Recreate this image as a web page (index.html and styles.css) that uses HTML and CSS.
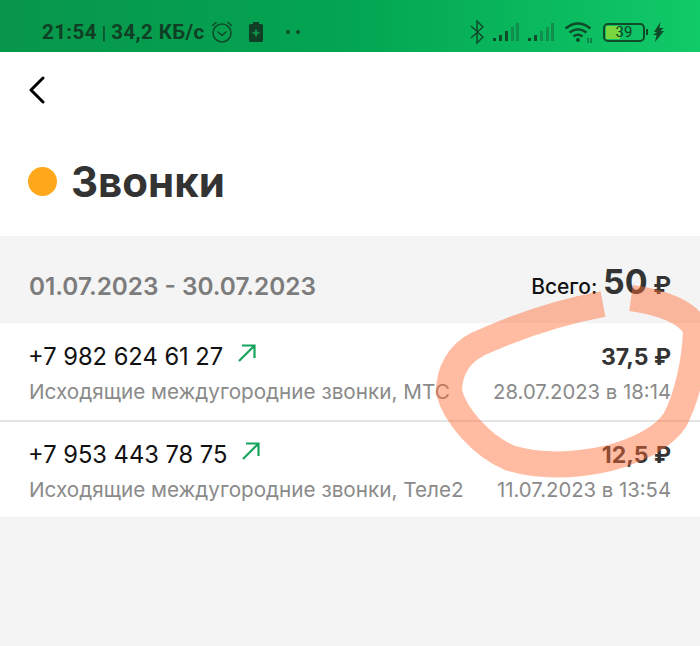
FILE: index.html
```html
<!DOCTYPE html>
<html lang="ru">
<head>
<meta charset="utf-8">
<title>Звонки</title>
<link rel="stylesheet" href="styles.css">
</head>
<body>
<div class="page">
  <header class="status">
    <div class="status-left">
      <span class="clock">21:54</span><span class="sep">|</span><span class="clock">34,2 КБ/с</span>
      <svg class="ico" width="24" height="24" viewBox="0 0 24 24" fill="none" stroke="#0f4a29" stroke-width="1.6" stroke-linecap="round" stroke-linejoin="round"><circle cx="12" cy="13" r="9"/><path d="M8 12l4 3.5 4-3.5M2.500 5.500L6 2.500M21.500 5.500L18 2.500"/></svg>
      <svg class="ico batt-small" width="16" height="22" viewBox="0 0 16 22"><path fill="#0f3f24" d="M5 1h6v2h2.500q1.500 0 1.500 1.500v15q0 1.500-1.500 1.500h-11q-1.500 0-1.500-1.500v-15q0-1.500 1.500-1.500H5z"/><path stroke="#0fa150" stroke-width="1.600" d="M8 8.500v7M4.500 12h7"/></svg>
      <span class="dots"><i></i><i></i></span>
    </div>
    <div class="status-right">
      <svg width="14" height="26" viewBox="0 0 14 26" fill="none" stroke="#0f4a29" stroke-width="1.500"><path d="M1 7l12 11-6 6V2l6 6L1 19"/></svg>
      <svg class="sig" width="27" height="20" viewBox="0 0 27 20"><path fill="#0f4a29" d="M1 16h3v3H1zM7 13h3v6H7z"/><path fill="#0f4a29" d="M13 9h3v10h-3z"/><path fill="#0f8f4b" d="M19 5h3v14h-3zM24 1h3v18h-3z"/></svg>
      <svg class="sig" width="27" height="20" viewBox="0 0 27 20"><path fill="#0f4a29" d="M1 16h3v3H1zM7 13h3v6H7z"/><path fill="#0f8f4b" d="M13 9h3v10h-3zM19 5h3v14h-3zM24 1h3v18h-3z"/></svg>
      <svg class="wifi" width="30" height="24" viewBox="0 0 30 24" fill="none" stroke="#0f4a29" stroke-width="2.400"><path d="M1.500 8.500Q14-1.500 26.500 8.500M5.500 12.500Q14 6 22.500 12.500M9.500 16.500Q14 13 18.500 16.500"/><circle cx="14" cy="20" r="2" fill="#0f4a29" stroke="none"/><path stroke-width="1" d="M24 18v5M27 18v5"/></svg>
      <div class="battery"><span class="level"></span><span class="pct">39</span></div>
      <span class="nub"></span>
      <svg width="11" height="20" viewBox="0 0 11 20"><path fill="#0f4a29" d="M7.500 0L1 10h3L0 13h3.500L2 20l9-11H7.500l3-3H6.500z"/></svg>
    </div>
  </header>

  <section class="head">
    <svg class="back" width="18" height="28" viewBox="0 0 18 28" fill="none" stroke="#000" stroke-width="3" stroke-linecap="round" stroke-linejoin="round"><path d="M15 2L3 14l12 12"/></svg>
    <div class="title-row">
      <span class="dot"></span>
      <h1>Звонки</h1>
    </div>
  </section>

  <main class="body">
    <div class="summary">
      <span class="range">01.07.2023 - 30.07.2023</span>
      <span class="total"><span class="total-label">Всего:</span> <b>50</b> <b class="cur">₽</b></span>
    </div>
    <div class="list">
      <div class="row">
        <div class="line">
          <span class="phone">+7 982 624 61 27 <svg class="arrow" width="18" height="18" viewBox="0 0 18 18" fill="none" stroke="#17a35d" stroke-width="2.200"><path d="M1 17L16.500 1.500M4 1.500h12.500V14"/></svg></span>
          <span class="amount">37,5 ₽</span>
        </div>
        <div class="line sub">
          <span>Исходящие междугородние звонки, МТС</span>
          <span class="when">28.07.2023 в 18:14</span>
        </div>
      </div>
      <div class="row">
        <div class="line">
          <span class="phone">+7 953 443 78 75 <svg class="arrow" width="18" height="18" viewBox="0 0 18 18" fill="none" stroke="#17a35d" stroke-width="2.200"><path d="M1 17L16.500 1.500M4 1.500h12.500V14"/></svg></span>
          <span class="amount">12,5 ₽</span>
        </div>
        <div class="line sub">
          <span>Исходящие междугородние звонки, Теле2</span>
          <span class="when">11.07.2023 в 13:54</span>
        </div>
      </div>
    </div>
  </main>

  <svg class="scribble" width="700" height="646" viewBox="0 0 700 646" fill="none" stroke="#ff6a33" stroke-opacity=".45" stroke-width="26" stroke-linejoin="round"><path d="M603 304C560 312 520 325 478 344C458 354 449 372 449 392C455 415 480 445 510 458C540 467 575 466 610 458C645 448 665 435 675 420C688 395 695 360 696 330C690 312 660 302 631 298"/></svg>
</div>
</body>
</html>
```
FILE: styles.css
```css
* { box-sizing: border-box; }
html, body { margin: 0; padding: 0; }
body { width: 700px; height: 646px; overflow: hidden; background: #f4f4f4; font-family: "Inter", "Liberation Sans", sans-serif; }
.page { position: relative; width: 700px; height: 646px; display: flex; flex-direction: column; }

.status { height: 52px; padding: 20px 36px 0 42px; display: flex; justify-content: space-between; align-items: flex-start; background: linear-gradient(90deg, #08964a 0%, #03a552 50%, #11ca68 100%); color: #0f3f24; font-family: "Roboto", sans-serif; }
.status-left { display: flex; align-items: center; height: 24px; }
.clock { font-size: 20.500px; font-weight: 700; letter-spacing: .4px; }
.sep { font-size: 18px; margin: 0 5px; font-weight: 400; }
.ico { margin-left: 5px; }
.batt-small { margin-left: 14px; }
.dots { display: flex; gap: 6px; margin-left: 22px; }
.dots i { width: 4px; height: 4px; border-radius: 50%; background: #0f4a29; }
.status-right { display: flex; align-items: center; height: 24px; }
.sig { margin-left: 8px; }
.status-right .sig:first-of-type { margin-left: 10px; }
.wifi { margin-left: 10px; }
.battery { position: relative; width: 42px; height: 19px; margin-left: 9px; border: 2px solid #0f4a29; border-radius: 5px; font-size: 15px; line-height: 15px; text-align: center; color: #0f3f24; overflow: hidden; }
.level { position: absolute; left: 1px; top: 1px; bottom: 1px; width: 14px; background: #7ad63f; }
.pct { position: relative; }
.nub { width: 2px; height: 6px; margin: 0 5px 0 1px; background: #0f4a29; }

.head { height: 184px; background: #fff; padding: 24px 0 0 28px; }
.back { display: block; }
.title-row { display: flex; align-items: center; gap: 14px; margin-top: 50px; }
.dot { width: 29px; height: 29px; border-radius: 50%; background: #ffa81c; }
h1 { margin: 2px 0 0; font-size: 42px; line-height: 52px; font-weight: 700; color: #333; }

.body { flex: 1; }
.summary { height: 87px; padding: 0 29px; display: flex; justify-content: space-between; align-items: center; }
.range { font-size: 24.300px; font-weight: 600; color: #7c7c7c; margin-top: 12px; }
.total { font-size: 21px; font-weight: 500; color: #111; margin-top: 4px; }
.total b { font-size: 34px; font-weight: 700; color: #333; }
.total .cur { font-size: 24px; }

.list { background: #fff; }
.row { height: 97px; padding: 17px 29px 0; }
.row + .row { border-top: 2px solid #e4e4e4; height: 97px; padding-top: 16px; }
.line { display: flex; justify-content: space-between; align-items: center; }
.phone { font-size: 23.700px; line-height: 34px; color: #111; white-space: nowrap; margin-left: -1px; }
.arrow { margin: 0 0 0 8px; vertical-align: 3px; }
.amount { font-size: 23px; font-weight: 700; color: #333; }
.sub { font-size: 20.700px; line-height: 30px; color: #8a8a8a; margin-top: 3px; white-space: nowrap; }
.when { font-size: 20.300px; }

.scribble { position: absolute; left: 0; top: 0; pointer-events: none; }
```
